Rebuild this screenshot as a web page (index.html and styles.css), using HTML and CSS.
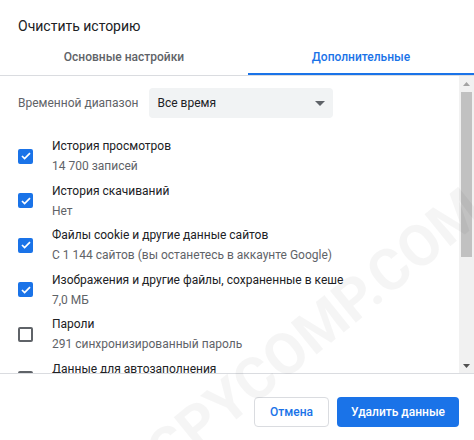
FILE: index.html
```html
<!DOCTYPE html>
<html lang="ru">
<head>
    <meta charset="UTF-8">
    <meta name="viewport" content="width=device-width, initial-scale=1.0">
    <title>Очистить историю</title>
    <link rel="stylesheet" href="styles.css">
</head>
<body>
    <div class="dialog">
        <div class="title">Очистить историю</div>
        <div class="tabs">
            <div class="tab first">Основные настройки</div>
            <div class="tab active">Дополнительные</div>
        </div>
        <div class="body">
            <div class="scroll">
                <div class="range">
                    <span class="range-label">Временной диапазон</span>
                    <div class="select">
                        <span>Все время</span>
                        <svg class="arrow" width="10" height="5" viewBox="0 0 10 5"><path d="M0 0h10L5 5z" fill="#5f6368"/></svg>
                    </div>
                </div>
                <div class="list">
                    <div class="row">
                        <span class="box checked"><svg width="10" height="8" viewBox="0 0 10 8"><path d="M1 4l2.6 2.6L9 1.2" fill="none" stroke="#fff" stroke-width="1.7"/></svg></span>
                        <div class="text"><div class="name">История просмотров</div><div class="sub">14 700 записей</div></div>
                    </div>
                    <div class="row">
                        <span class="box checked"><svg width="10" height="8" viewBox="0 0 10 8"><path d="M1 4l2.6 2.6L9 1.2" fill="none" stroke="#fff" stroke-width="1.7"/></svg></span>
                        <div class="text"><div class="name">История скачиваний</div><div class="sub">Нет</div></div>
                    </div>
                    <div class="row">
                        <span class="box checked"><svg width="10" height="8" viewBox="0 0 10 8"><path d="M1 4l2.6 2.6L9 1.2" fill="none" stroke="#fff" stroke-width="1.7"/></svg></span>
                        <div class="text"><div class="name">Файлы cookie и другие данные сайтов</div><div class="sub">С 1 144 сайтов (вы останетесь в аккаунте Google)</div></div>
                    </div>
                    <div class="row">
                        <span class="box checked"><svg width="10" height="8" viewBox="0 0 10 8"><path d="M1 4l2.6 2.6L9 1.2" fill="none" stroke="#fff" stroke-width="1.7"/></svg></span>
                        <div class="text"><div class="name">Изображения и другие файлы, сохраненные в кеше</div><div class="sub">7,0 МБ</div></div>
                    </div>
                    <div class="row">
                        <span class="box"></span>
                        <div class="text"><div class="name">Пароли</div><div class="sub">291 синхронизированный пароль</div></div>
                    </div>
                    <div class="row">
                        <span class="box"></span>
                        <div class="text"><div class="name">Данные для автозаполнения</div><div class="sub">3 адреса, 25 других записей</div></div>
                    </div>
                </div>
            </div>
            <div class="scrollbar">
                <div class="sb-btn"><svg width="7" height="4" viewBox="0 0 7 4"><path d="M0 4L3.5 0 7 4z" fill="#a3a3a3"/></svg></div>
                <div class="sb-track"><div class="sb-thumb"></div></div>
                <div class="sb-btn"><svg width="7" height="4" viewBox="0 0 7 4"><path d="M0 0h7L3.5 4z" fill="#505050"/></svg></div>
            </div>
        </div>
        <div class="footer">
            <button class="btn cancel">Отмена</button>
            <button class="btn primary">Удалить данные</button>
        </div>
        <div class="watermark">SPYCOMP.COM</div>
    </div>
</body>
</html>
```

FILE: styles.css
```css
body{
    margin: 0;
    font-family: Roboto, "Liberation Sans", sans-serif;
    background: #fff;
}
.dialog{
    position: relative;
    width: 474px;
    height: 440px;
    display: flex;
    flex-direction: column;
    overflow: hidden;
    background: #fff;
}
.title{
    padding: 16px 18px 2px;
    font-size: 14px;
    line-height: 20px;
    color: #202124;
}
.tabs{
    display: flex;
    border-bottom: 1px solid #dadce0;
}
.tab{
    flex: 1;
    height: 37px;
    box-sizing: border-box;
    padding-top: 3px;
    display: flex;
    align-items: center;
    justify-content: center;
    font-size: 12px;
    font-weight: 500;
    color: #5f6368;
    border-bottom: 2px solid transparent;
}
.tab.first{
    flex: 0 0 248px;
}
.tab.active{
    color: #1a73e8;
    border-bottom-color: #1a73e8;
}
.body{
    flex: 1;
    min-height: 0;
    display: flex;
}
.scroll{
    flex: 1;
    overflow: hidden;
    padding-top: 12px;
}
.scrollbar{
    width: 15px;
    background: #f1f1f1;
    display: flex;
    flex-direction: column;
}
.sb-btn{
    height: 15px;
    display: flex;
    align-items: center;
    justify-content: center;
}
.sb-track{
    flex: 1;
    padding-top: 1px;
}
.sb-thumb{
    height: 165px;
    margin: 0 2px;
    background: #c1c1c1;
}
.range{
    display: flex;
    align-items: center;
    gap: 11px;
    padding-left: 18px;
}
.range-label{
    font-size: 12px;
    color: #5f6368;
}
.select{
    width: 184px;
    height: 30px;
    box-sizing: border-box;
    background: #f1f3f4;
    border-radius: 4px;
    display: flex;
    align-items: center;
    justify-content: space-between;
    padding: 0 8px;
    font-size: 12px;
    color: #202124;
}
.list{
    margin-top: 16px;
}
.row{
    display: flex;
    align-items: center;
    gap: 19px;
    min-height: 44.5px;
    padding: 2px 0 2px 18px;
    box-sizing: border-box;
}
.box{
    width: 15px;
    height: 15px;
    box-sizing: border-box;
    border: 2px solid #5f6368;
    border-radius: 2px;
    display: flex;
    align-items: center;
    justify-content: center;
    flex-shrink: 0;
}
.box.checked{
    background: #1a73e8;
    border-color: #1a73e8;
}
.text{
    font-size: 12px;
    line-height: 20px;
}
.name{
    color: #202124;
}
.sub{
    color: #5f6368;
}
.footer{
    border-top: 1px solid #dadce0;
    padding: 23px 15px 13px;
    display: flex;
    justify-content: flex-end;
    gap: 8px;
}
.btn{
    height: 30px;
    padding: 0 14px;
    border-radius: 4px;
    font-family: Roboto, "Liberation Sans", sans-serif;
    font-size: 12px;
    font-weight: 500;
    cursor: pointer;
}
.cancel{
    background: #fff;
    border: 1px solid #dadce0;
    color: #1a73e8;
    padding: 0 15px;
}
.primary{
    background: #1a73e8;
    border: none;
    color: #fff;
}
.watermark{
    position: absolute;
    left: 135px;
    top: 432px;
    font-size: 58px;
    font-weight: bold;
    color: rgba(0, 0, 0, 0.04);
    transform: rotate(-39deg);
    transform-origin: left top;
    pointer-events: none;
    white-space: nowrap;
}
```
